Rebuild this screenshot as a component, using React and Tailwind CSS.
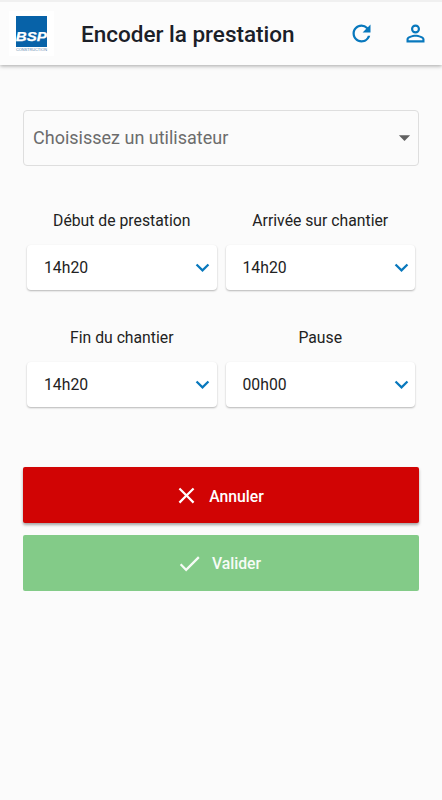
import { MdRefresh, MdPersonOutline, MdClear, MdCheck, MdExpandMore, MdArrowDropDown } from 'react-icons/md'

function Logo() {
  return (
    <div className="flex h-[45px] w-[45px] justify-center bg-white pt-[5px]">
      <svg width="33" height="38" viewBox="0 0 33 38" fontFamily="'Liberation Sans', Arial, sans-serif">
        <rect x="1" y="0" width="31" height="31" fill="#0762a8" />
        <text x="0.8" y="25.3" fontSize="12" fontWeight="700" fontStyle="italic" fill="#fff" stroke="#fff" strokeWidth="0.25" textLength="31" lengthAdjust="spacingAndGlyphs">BSP</text>
        <text x="1" y="35.1" fontSize="3.9" fill="#5b84ab" textLength="31" lengthAdjust="spacing">CONSTRUCTION</text>
      </svg>
    </div>
  )
}

function Header() {
  return (
    <header className="flex h-[65px] items-center border-t-2 border-[#f0f0f0] bg-[#fcfcfc] pl-[9px] pr-[13.5px] shadow-[0_1px_4px_rgba(0,0,0,0.35)]">
      <Logo />
      <h1 className="ml-[27px] flex-1 whitespace-nowrap text-[22.5px] font-medium leading-7 text-[#1b2028]">Encoder la prestation</h1>
      <MdRefresh size={27} className="mb-px text-[#0878bd]" />
      <MdPersonOutline size={27} className="mb-px ml-[27px] text-[#0878bd]" />
    </header>
  )
}

function TimeField({ label, value }) {
  return (
    <div>
      <div className="h-[34px] pt-px text-center text-[15.75px] leading-[18px] text-[#222]">{label}</div>
      <div className="flex h-[45px] items-center justify-between rounded-[4px] bg-white pl-[17px] pr-[0.5px] text-[15.75px] text-[#222] shadow-[0_1px_2px_rgba(0,0,0,0.28)]">
        <span>{value}</span>
        <MdExpandMore size={27} className="mb-px text-[#0878bd]" />
      </div>
    </div>
  )
}

export default function App() {
  return (
    <div className="h-[800px] w-[442px] overflow-hidden bg-[#fbfbfb] font-[Roboto,sans-serif]">
      <Header />
      <main className="pl-[23px] pr-[23px] pt-[45px]">
        <div className="flex h-14 items-center justify-between rounded-[4px] border border-[#dedede] pb-px pl-[9px]">
          <span className="text-[18px] leading-6 text-[#6c6c6c]">Choisissez un utilisateur</span>
          <MdArrowDropDown size={27} className="text-[#616161]" />
        </div>
        <div className="mt-[45px] grid grid-cols-2 gap-x-[9px] gap-y-[38px] px-1">
          <TimeField label="Début de prestation" value="14h20" />
          <TimeField label="Arrivée sur chantier" value="14h20" />
          <TimeField label="Fin du chantier" value="14h20" />
          <TimeField label="Pause" value="00h00" />
        </div>
        <button className="mt-[60px] flex h-14 w-full items-center justify-center gap-[9px] rounded-[2px] bg-[#d10404] pr-[5px] pt-px text-[15.75px] font-medium text-white shadow-[0_2px_3px_rgba(0,0,0,0.35)]">
          <MdClear size={27} />
          <span className="pt-0.5">Annuler</span>
        </button>
        <button className="mt-3 flex h-14 w-full items-center justify-center gap-[9px] rounded-[2px] bg-[#83cb88] pr-[5px] text-[15.75px] font-medium text-[#f6fbf6]">
          <MdCheck size={27} />
          <span className="pt-px">Valider</span>
        </button>
      </main>
    </div>
  )
}
